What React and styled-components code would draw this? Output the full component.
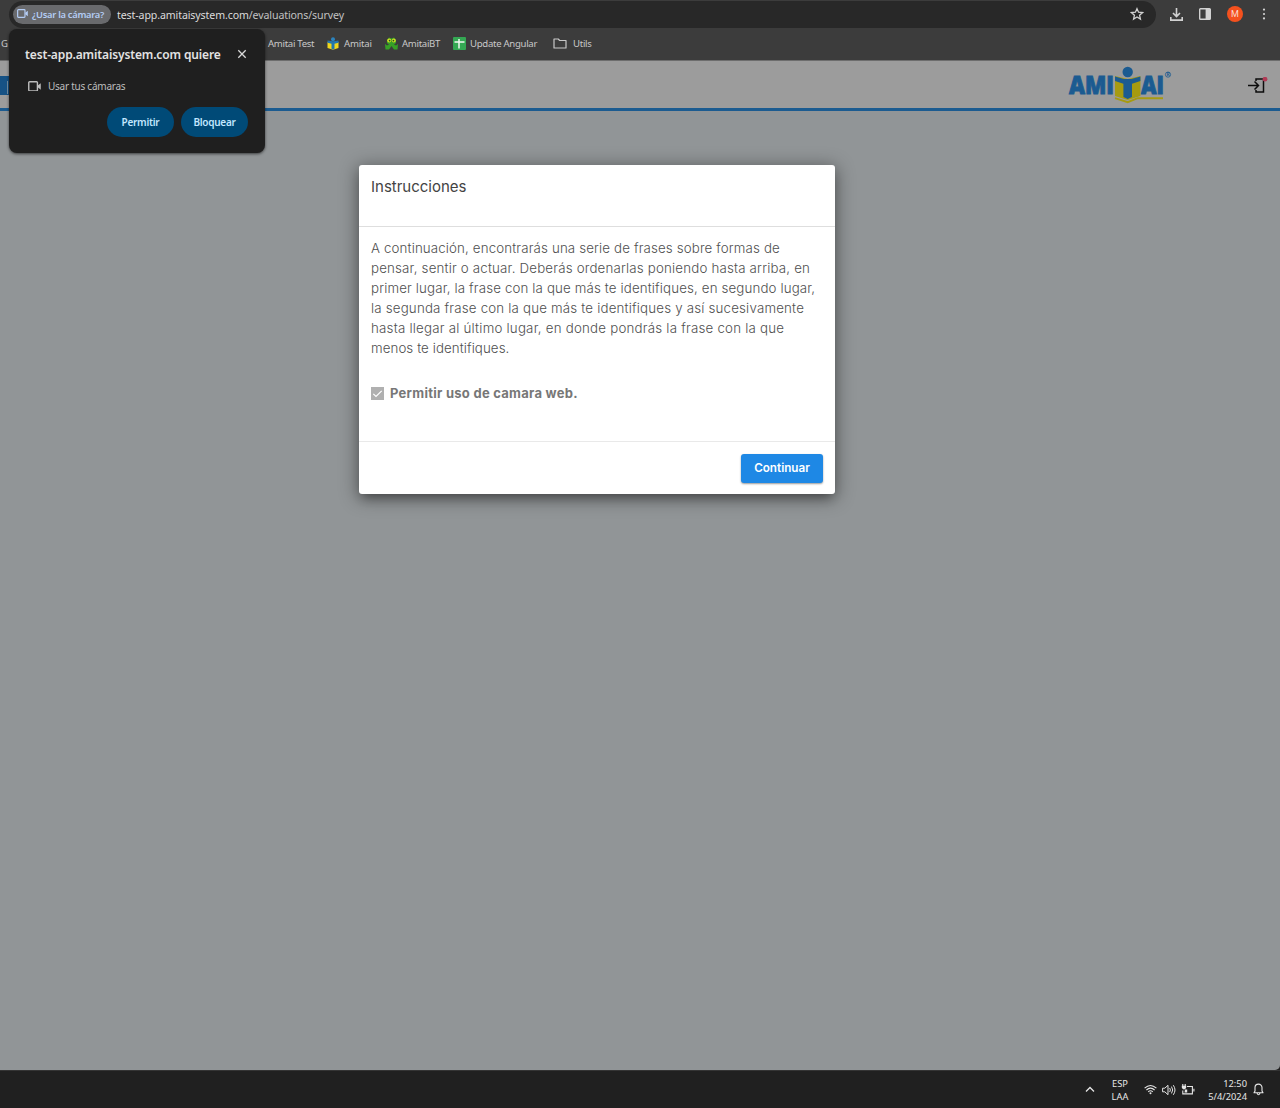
import styled, {createGlobalStyle} from "styled-components";

const GlobalStyle = createGlobalStyle`
	* {
		box-sizing: border-box;
	}

	body {
		margin: 0;
		overflow: hidden;
		font-family: "Noto Sans", sans-serif;
	}
`;

const Screen = styled.div`
	height: 1108px;
	display: flex;
	flex-direction: column;
	position: relative;
	background: #202020;
`;

const Fit = styled.span`
	white-space: pre;
	letter-spacing: ${({$spacing}) => $spacing || 0}px;
`;

const AddressRow = styled.div`
	height: 28px;
	display: flex;
	align-items: center;
	background: #3c3c3c;
	padding: 1px 9px 0 9px;
`;

const AddressBar = styled.div`
	width: 1147px;
	height: 27px;
	display: flex;
	align-items: center;
	padding: 0 12px 1px 4px;
	border-radius: 14px;
	background: #282828;
	color: #dcdcdc;
	font-size: 10.6px;
`;

const CameraChip = styled.div`
	width: 98px;
	height: 19px;
	display: flex;
	align-items: center;
	gap: 4px;
	padding-left: 4px;
	margin-right: 6px;
	border-radius: 10px;
	background: #696a6d;
	color: #b4cdf5;
	font-size: 9.3px;
	font-weight: 600;
`;

const Url = styled.div`
	flex: 1;
	padding-top: 1px;

	& em {
		font-style: normal;
		color: #c2c2c2;
	}
`;

const Tools = styled.div`
	flex: 1;
	display: flex;
	align-items: center;
	gap: 16px;
	padding: 0 0 1px 14px;
	color: #d2d2d2;

	& > svg:last-child {
		margin-left: 3px;
	}
`;

const Avatar = styled.div`
	width: 16px;
	height: 16px;
	border-radius: 50%;
	background: #f4511e;
	color: #fbd9cd;
	font: 9px/16px Roboto, sans-serif;
	text-align: center;
`;

const BookmarksRow = styled.div`
	height: 33px;
	display: flex;
	align-items: center;
	background: #3c3c3c;
	border-bottom: 1px solid #6d6d6d;
	color: #c8c8c8;
	font-size: 9.6px;
	padding: 0 0 1px 1px;
`;

const Bookmark = styled.div`
	width: ${({$width}) => $width}px;
	display: flex;
	align-items: center;
	gap: ${({$gap}) => $gap || 4}px;

	& svg {
		flex: none;
	}
`;

const SiteHeader = styled.header`
	height: 50px;
	display: flex;
	align-items: center;
	justify-content: space-between;
	background: #9c9c9c;
	border-bottom: 3px solid #1b5b90;
	padding-right: 12px;
`;

const MenuButton = styled.div`
	width: 20px;
	height: 19px;
	display: flex;
	align-items: flex-end;
	padding-left: 7px;
	margin-top: 2px;
	background: #165285;

	&::before {
		content: "";
		width: 1px;
		height: 13px;
		margin-bottom: 1px;
		background: #7590a5;
	}
`;

const HeaderRight = styled.div`
	display: flex;
	align-items: center;
	gap: 75px;
	padding-top: 1px;
`;

const Page = styled.main`
	flex: 1;
	padding: 54px 0 0 359px;
	border-bottom-right-radius: 5px;
	background: #919597;
`;

const Modal = styled.section`
	width: 476px;
	height: 329px;
	display: flex;
	flex-direction: column;
	border-radius: 3px;
	background: #fff;
	box-shadow: 0 7px 10px -4px rgba(0, 0, 0, 0.3), 0 3px 18px 2px rgba(0, 0, 0, 0.38);
	font-family: Inter, sans-serif;
`;

const ModalHeader = styled.div`
	height: 62px;
	padding: 10px 12px;
	border-bottom: 1px solid #dedede;
	color: #434343;
	font-size: 15px;
	line-height: 24px;
`;

const ModalBody = styled.div`
	flex: 1;
	padding: 11px 12px 0;
`;

const Instructions = styled.div`
	display: flex;
	flex-direction: column;
	color: #505050;
	font-size: 13.3px;
	font-weight: 300;
	line-height: 20px;
`;

const CheckRow = styled.div`
	height: 20px;
	display: flex;
	align-items: center;
	gap: 6px;
	margin-top: 25px;
	color: #777;
	font-size: 13px;
	font-weight: 700;
`;

const CheckBox = styled.div`
	width: 13px;
	height: 13px;
	display: flex;
	background: #b0b0b0;
`;

const ModalFooter = styled.div`
	height: 53px;
	display: flex;
	justify-content: flex-end;
	padding: 11.5px 12px;
	border-top: 1px solid #e9e9e9;
`;

const ContinueButton = styled.button`
	width: 82px;
	height: 29px;
	padding: 0 0 1px;
	border: 0;
	border-radius: 3px;
	background: #1e88e5;
	color: #fff;
	font: 600 11.7px Inter, sans-serif;
	box-shadow: 0 1px 2px rgba(0, 0, 0, 0.4);
`;

const PermissionPopup = styled.div`
	position: absolute;
	left: 9px;
	top: 29px;
	width: 256px;
	height: 124px;
	padding: 15px 18px 0 16px;
	border-radius: 8px;
	background: #1f1f1f;
	box-shadow: 0 1px 3px rgba(0, 0, 0, 0.6);
	color: #e3e3e3;
`;

const PopupTitle = styled.div`
	height: 20px;
	display: flex;
	align-items: center;
	justify-content: space-between;
	font-size: 12px;
	font-weight: 600;
`;

const PopupItem = styled.div`
	height: 20px;
	display: flex;
	align-items: center;
	gap: 7px;
	margin-top: 12px;
	padding-left: 3px;
	color: #bdbdbd;
	font-size: 10px;
`;

const PopupActions = styled.div`
	display: flex;
	justify-content: flex-end;
	gap: 7px;
	margin: 11px -1px 0 0;
`;

const PillButton = styled.button`
	width: 67px;
	height: 30px;
	padding: 0;
	border: 0;
	border-radius: 15px;
	background: #004a77;
	color: #c2e7ff;
	font: 600 10px "Noto Sans", sans-serif;
	letter-spacing: -0.28px;
`;

const Taskbar = styled.footer`
	height: 38px;
	display: flex;
	align-items: center;
	justify-content: flex-end;
	padding: 0 16px 0 0;
	background: #202020;
	border-top: 1px solid #343434;
	color: #e6e6e6;
	font-size: 9.3px;
	line-height: 13px;
`;

const Language = styled.div`
	width: 30px;
	margin: 0 9px 0 10px;
	text-align: center;
`;

const TrayIcons = styled.div`
	display: flex;
	align-items: center;
	gap: 5px;
`;

const Clock = styled.div`
	width: 52px;
	margin-right: 6px;
	text-align: right;
`;

const CameraIcon = ({size = 12}) => (
	<svg width={size} height={size * 10 / 12} viewBox="0 0 12 10" fill="none" stroke="currentColor" strokeWidth="1.3">
		<rect x="0.7" y="0.7" width="8" height="8.4" rx="0.8" />
		<path d="M9 4.2 11.8 2v6L9 5.8z" fill="currentColor" stroke="none" />
	</svg>
);

const StarIcon = () => (
	<svg width="14" height="14" viewBox="0 0 24 24" fill="none" stroke="#d2d2d2" strokeWidth="2.2">
		<path d="m12 2.8 2.7 6.2 6.8.6-5.1 4.5 1.5 6.6-5.9-3.5-5.9 3.5 1.5-6.6-5.1-4.5 6.8-.6z" />
	</svg>
);

const DownloadIcon = () => (
	<svg width="13" height="13" viewBox="0 0 13 13" fill="none" stroke="currentColor" strokeWidth="1.6">
		<path d="M6.5 0v8M3 5l3.5 3.5L10 5M.8 9v3.1h11.4V9" />
	</svg>
);

const SidePanelIcon = () => (
	<svg width="12" height="12" viewBox="0 0 12 12">
		<rect x="0.7" y="0.7" width="10.6" height="10.6" rx="0.8" fill="none" stroke="currentColor" strokeWidth="1.4" />
		<path d="M6.6 1h4.7v10H6.6z" fill="currentColor" />
	</svg>
);

const DotsIcon = () => (
	<svg width="4" height="12" viewBox="0 0 4 12" fill="currentColor">
		<circle cx="2" cy="1.6" r="1.1" />
		<circle cx="2" cy="6" r="1.1" />
		<circle cx="2" cy="10.4" r="1.1" />
	</svg>
);

const AmitaiIcon = () => (
	<svg width="12" height="13" viewBox="0 0 12 13">
		<path d="M.5 5 6 6l5.5-1v6L6 12.8.5 11z" fill="#f0d81c" />
		<circle cx="6" cy="2.2" r="2" fill="#2c83bd" />
		<path d="M.5 3.5 6 4.2l5.5-.7v2.2l-4 1v5L6 12.4l-1.5-.7v-5l-4-1z" fill="#2277ad" />
	</svg>
);

const FrogIcon = () => (
	<svg width="13" height="13" viewBox="0 0 13 13">
		<path d="M2 3 4 .5l2.5 1L9 .5 11 3v3L9 7.5l2 1L13 7l-.5 5.5H9L6.5 9 4 12.5H.5L0 7l2 1.5 2-1L2 6z" fill="#36a026" />
		<circle cx="4.2" cy="3.4" r="2" fill="#d5dc25" />
		<circle cx="8.8" cy="3.4" r="2" fill="#d5dc25" />
		<circle cx="4.6" cy="3.6" r="0.9" fill="#245b20" />
		<circle cx="8.4" cy="3.6" r="0.9" fill="#245b20" />
	</svg>
);

const SheetIcon = () => (
	<svg width="13" height="13" viewBox="0 0 13 13">
		<rect width="13" height="13" rx="1" fill="#34a853" />
		<path d="M1.5 5h10M6 2v9.5" stroke="#f2f8f2" strokeWidth="1.5" />
	</svg>
);

const FolderIcon = () => (
	<svg width="14" height="11" viewBox="0 0 14 11" fill="none" stroke="#c8c8c8" strokeWidth="1.2">
		<path d="M1 1h4.2l1.5 1.5H13V10H1z" strokeLinejoin="round" />
	</svg>
);

const AmitaiLogo = () => (
	<svg width="104" height="38" viewBox="0 0 104 38">
		<g fill="#1b5b91" stroke="#1b5b91" strokeWidth="0.9" fontFamily="Open Sans, sans-serif" fontWeight="800" fontSize="25">
			<text x="1" y="27.5" textLength="45" lengthAdjust="spacingAndGlyphs">AMI</text>
			<text x="73" y="27.5" textLength="23" lengthAdjust="spacingAndGlyphs">AI</text>
		</g>
		<path d="m47 10 12.7 3 12.7-3v20l-12.7 4L47 30z" fill="#a69b10" />
		<path d="m47 32.2 12.7 4 10-4H95" fill="none" stroke="#a69b10" strokeWidth="1.9" />
		<circle cx="59.7" cy="6" r="5.2" fill="#1b5b91" />
		<path d="m47 10.5 9 2.5h7.4l9-2.5V15l-8.4 2.8V31l-4.3 2-4.3-2V17.8L47 15z" fill="#1b5b91" />
		<circle cx="100" cy="8.6" r="2.6" fill="none" stroke="#1b5b91" strokeWidth="0.8" />
		<text x="98.4" y="10.4" fontSize="4.8" fontWeight="700" fill="#1b5b91">R</text>
	</svg>
);

const LoginIcon = () => (
	<svg width="21" height="17" viewBox="0 0 21 17" fill="none" stroke="#0c0c0c" strokeWidth="1.5">
		<path d="M1 8.5h10.5M7.5 4.5l4 4-4 4M9 4V2h7.5v13H9v-2" />
		<circle cx="18" cy="2.2" r="2.4" fill="#b03a55" stroke="none" />
	</svg>
);

const WifiIcon = () => (
	<svg width="13" height="11" viewBox="0 0 13 11" fill="none" stroke="currentColor" strokeWidth="1.1">
		<path d="M.6 4.2q5.9-5.4 11.8 0M2.4 6q4.1-3.8 8.2 0M4.2 7.8q2.3-2 4.6 0" />
		<circle cx="6.5" cy="9.3" r="1" fill="currentColor" stroke="none" />
	</svg>
);

const VolumeIcon = () => (
	<svg width="14" height="12" viewBox="0 0 14 12" fill="none" stroke="currentColor" strokeWidth="1">
		<path d="M.6 4.2h2.2L6 1.3v9.4L2.8 7.8H.6zM7.7 4q1.4 2 0 4M9.5 2.6q2.4 3.4 0 6.8M11.3 1.2q3.4 4.8 0 9.6" />
	</svg>
);

const BatteryIcon = () => (
	<svg width="14" height="12" viewBox="0 0 14 12" fill="none" stroke="currentColor" strokeWidth="1.1">
		<path d="M6 2.5h5.4v7.4H1.8V6.5M12.9 4.8v2.8" />
		<path d="M1.8 0v2M4.2 0v2" />
		<path d="M.8 1.8h4.4v1.6Q4.5 5.4 3 5.4T.8 3.4zM4 5.5h2.2v3H3.5z" fill="currentColor" stroke="none" />
	</svg>
);

const BellIcon = () => (
	<svg width="11" height="13" viewBox="0 0 11 13" fill="none" stroke="currentColor" strokeWidth="1.1">
		<path d="M1 9.8 2 8V4.6a3.5 3.5 0 0 1 7 0V8l1 1.8zM4 10.3q1.5 3 3 0" strokeLinejoin="round" />
	</svg>
);

const lines = [
	{text: "A continuación, encontrarás una serie de frases sobre formas de", spacing: 0.14},
	{text: "pensar, sentir o actuar. Deberás ordenarlas poniendo hasta arriba, en", spacing: 0.18},
	{text: "primer lugar, la frase con la que más te identifiques, en segundo lugar,", spacing: 0.14},
	{text: "la segunda frase con la que más te identifiques y así sucesivamente", spacing: 0.19},
	{text: "hasta llegar al último lugar, en donde pondrás la frase con la que", spacing: 0.22},
	{text: "menos te identifiques.", spacing: 0.09},
];

const App = () => {
	return (
		<Screen>
			<GlobalStyle />
			<AddressRow>
				<AddressBar>
					<CameraChip><CameraIcon size={11} /><Fit $spacing={-0.26}>¿Usar la cámara?</Fit></CameraChip>
					<Url><Fit $spacing={-0.11}>test-app.amitaisystem.com<em>/evaluations/survey</em></Fit></Url>
					<StarIcon />
				</AddressBar>
				<Tools>
					<DownloadIcon />
					<SidePanelIcon />
					<Avatar>M</Avatar>
					<DotsIcon />
				</Tools>
			</AddressRow>
			<BookmarksRow>
				<Bookmark $width={267}>G</Bookmark>
				<Bookmark $width={59}><Fit $spacing={-0.3}>Amitai Test</Fit></Bookmark>
				<Bookmark $width={58} $gap={5}><AmitaiIcon /><Fit $spacing={-0.2}>Amitai</Fit></Bookmark>
				<Bookmark $width={68}><FrogIcon /><Fit $spacing={-0.3}>AmitaiBT</Fit></Bookmark>
				<Bookmark $width={100}><SheetIcon /><Fit $spacing={-0.3}>Update Angular</Fit></Bookmark>
				<Bookmark $width={50} $gap={6}><FolderIcon /><Fit $spacing={-0.3}>Utils</Fit></Bookmark>
			</BookmarksRow>
			<SiteHeader>
				<MenuButton />
				<HeaderRight>
					<AmitaiLogo />
					<LoginIcon />
				</HeaderRight>
			</SiteHeader>
			<Page>
				<Modal>
					<ModalHeader><Fit>Instrucciones</Fit></ModalHeader>
					<ModalBody>
						<Instructions>
							{lines.map(({text, spacing}) => (
								<div key={text}><Fit $spacing={spacing}>{text}</Fit></div>
							))}
						</Instructions>
						<CheckRow>
							<CheckBox>
								<svg width="13" height="13" viewBox="0 0 13 13" fill="none" stroke="#fff" strokeWidth="1.2">
									<path d="m2.3 6.8 2.7 2.7 5.7-5.7" />
								</svg>
							</CheckBox>
							<Fit $spacing={0.27}>Permitir uso de camara web.</Fit>
						</CheckRow>
					</ModalBody>
					<ModalFooter>
						<ContinueButton>Continuar</ContinueButton>
					</ModalFooter>
				</Modal>
			</Page>
			<Taskbar>
				<svg width="10" height="7" viewBox="0 0 10 7" fill="none" stroke="currentColor" strokeWidth="1.3">
					<path d="m1 5.5 4-4 4 4" />
				</svg>
				<Language>ESP<br />LAA</Language>
				<TrayIcons>
					<WifiIcon />
					<VolumeIcon />
					<BatteryIcon />
				</TrayIcons>
				<Clock>12:50<br />5/4/2024</Clock>
				<BellIcon />
			</Taskbar>
			<PermissionPopup>
				<PopupTitle>
					<Fit $spacing={-0.13}>test-app.amitaisystem.com quiere</Fit>
					<svg width="10" height="10" viewBox="0 0 10 10" stroke="#d8d8d8" strokeWidth="1.3">
						<path d="m1.3 1.3 7.4 7.4M8.7 1.3 1.3 8.7" />
					</svg>
				</PopupTitle>
				<PopupItem><CameraIcon size={13} /><Fit $spacing={-0.25}>Usar tus cámaras</Fit></PopupItem>
				<PopupActions>
					<PillButton>Permitir</PillButton>
					<PillButton>Bloquear</PillButton>
				</PopupActions>
			</PermissionPopup>
		</Screen>
	);
};

export default App;
